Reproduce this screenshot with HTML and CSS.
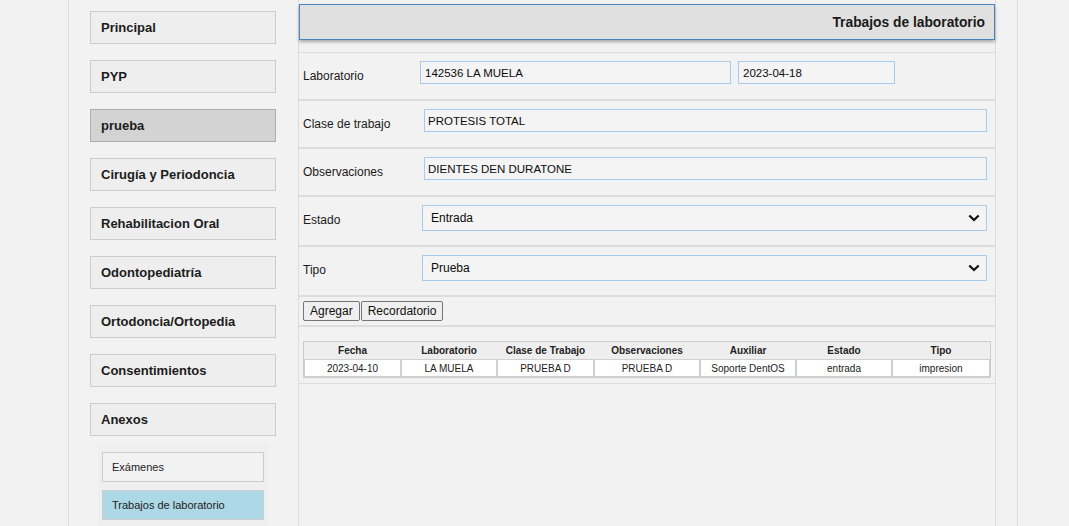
FILE: index.html
```html
<!DOCTYPE html>
<html lang="es">
<head>
<meta charset="utf-8">
<title>Trabajos de laboratorio</title>
<link rel="stylesheet" href="styles.css">
</head>
<body>
<div class="page">
  <aside class="sidebar">
    <div class="nav-btn">Principal</div>
    <div class="nav-btn">PYP</div>
    <div class="nav-btn active">prueba</div>
    <div class="nav-btn">Cirugía y Periodoncia</div>
    <div class="nav-btn">Rehabilitacion Oral</div>
    <div class="nav-btn">Odontopediatría</div>
    <div class="nav-btn">Ortodoncia/Ortopedia</div>
    <div class="nav-btn">Consentimientos</div>
    <div class="nav-btn">Anexos</div>
    <div class="submenu">
      <div class="sub-btn">Exámenes</div>
      <div class="sub-btn active">Trabajos de laboratorio</div>
    </div>
  </aside>
  <main class="panel">
    <div class="panel-header">Trabajos de laboratorio</div>
    <div class="row">
      <span class="lbl lbl-a">Laboratorio</span>
      <div class="field field-lab">142536 LA MUELA</div>
      <div class="field field-date">2023-04-18</div>
    </div>
    <div class="row">
      <span class="lbl lbl-b">Clase de trabajo</span>
      <div class="field field-wide">PROTESIS TOTAL</div>
    </div>
    <div class="row">
      <span class="lbl lbl-b">Observaciones</span>
      <div class="field field-wide">DIENTES DEN DURATONE</div>
    </div>
    <div class="row row-select">
      <span class="lbl lbl-c">Estado</span>
      <div class="select">
        <span>Entrada</span>
        <svg class="chev" width="12" height="8" viewBox="0 0 12 8"><polyline points="1.3,1.5 6,6 10.7,1.5" fill="none" stroke="#111" stroke-width="2.3"/></svg>
      </div>
    </div>
    <div class="row row-select">
      <span class="lbl lbl-c">Tipo</span>
      <div class="select">
        <span>Prueba</span>
        <svg class="chev" width="12" height="8" viewBox="0 0 12 8"><polyline points="1.3,1.5 6,6 10.7,1.5" fill="none" stroke="#111" stroke-width="2.3"/></svg>
      </div>
    </div>
    <div class="row row-buttons">
      <button class="btn">Agregar</button>
      <button class="btn">Recordatorio</button>
    </div>
    <div class="row row-table">
      <table class="grid">
        <thead>
          <tr>
            <th class="c1">Fecha</th>
            <th class="c2">Laboratorio</th>
            <th class="c3">Clase de Trabajo</th>
            <th class="c4">Observaciones</th>
            <th class="c5">Auxiliar</th>
            <th class="c6">Estado</th>
            <th class="c7">Tipo</th>
          </tr>
        </thead>
        <tbody>
          <tr>
            <td>2023-04-10</td>
            <td>LA MUELA</td>
            <td>PRUEBA D</td>
            <td>PRUEBA D</td>
            <td>Soporte DentOS</td>
            <td>entrada</td>
            <td>impresion</td>
          </tr>
        </tbody>
      </table>
    </div>
  </main>
</div>
</body>
</html>
```

FILE: styles.css
```css
* { box-sizing: border-box; }

html, body {
  margin: 0;
  padding: 0;
  background: #f2f2f2;
  font-family: "Liberation Sans", Arial, sans-serif;
  color: #1a1a1a;
}

.page {
  margin-left: 68px;
  width: 950px;
  min-height: 526px;
  border-left: 1px solid #dcdcdc;
  border-right: 1px solid #dcdcdc;
  display: flex;
  align-items: stretch;
}

/* Sidebar */
.sidebar {
  width: 229px;
  flex: none;
  padding: 11px 0 0 21px;
  display: flex;
  flex-direction: column;
}

.nav-btn {
  width: 186px;
  height: 33px;
  margin-bottom: 16px;
  padding-left: 10px;
  display: flex;
  align-items: center;
  background: #eeeeee;
  border: 1px solid #cccccc;
  font-weight: bold;
  font-size: 13px;
  color: #1c1c1c;
}

.nav-btn.active {
  background: #d3d3d3;
  border-color: #adadad;
}

.nav-btn:nth-last-child(2) { margin-bottom: 8px; }

.submenu {
  margin-left: 8px;
  width: 170px;
  flex: 1;
  padding: 8px 4px 0;
  background: #efefef;
}

.sub-btn {
  width: 162px;
  height: 30px;
  margin-bottom: 8px;
  padding-left: 9px;
  display: flex;
  align-items: center;
  border: 1px solid #cccccc;
  background: #f2f2f2;
  font-size: 11px;
  color: #222;
}

.sub-btn.active {
  background: #add8e6;
}

/* Main panel */
.panel {
  width: 698px;
  flex: none;
  border-left: 1px solid #dcdcdc;
  border-right: 1px solid #dcdcdc;
  padding-top: 4px;
}

.panel-header {
  height: 36px;
  margin-bottom: 12px;
  padding-right: 9px;
  display: flex;
  align-items: center;
  justify-content: flex-end;
  background: #e0e0e0;
  border: 1px solid #4b84bb;
  box-shadow: 0 2px 3px rgba(0, 0, 0, 0.3);
  font-weight: bold;
  font-size: 13.8px;
  color: #1a1a1a;
}

.row {
  display: flex;
  align-items: flex-start;
  border-top: 1px solid #dddddd;
  border-bottom: 1px solid #dddddd;
  padding: 8px 8px 15px 4px;
}

.row-select { padding-bottom: 14px; }

.lbl {
  flex: none;
  padding-top: 8px;
  font-size: 12px;
  line-height: 14px;
  color: #1a1a1a;
}

.lbl-a { width: 117px; }
.lbl-b { width: 121px; }
.lbl-c { width: 119px; }

.field {
  height: 23px;
  display: flex;
  align-items: center;
  padding-left: 4px;
  background: #f4f4f4;
  border: 1px solid #a7caed;
  font-size: 11.5px;
  color: #0d0d0d;
}

.field-lab { width: 311px; }
.field-date { width: 157px; margin-left: 7px; }
.field-wide { flex: 1; padding-left: 3px; }

.select {
  flex: 1;
  height: 26px;
  display: flex;
  align-items: center;
  justify-content: space-between;
  padding: 0 6px 0 8px;
  background: #f4f4f4;
  border: 1px solid #a7caed;
  font-size: 12px;
  color: #0d0d0d;
}

.chev { display: block; }

.row-buttons {
  padding: 4px 4px;
  gap: 1px;
}

.btn {
  height: 20px;
  padding: 0 6px;
  margin: 0;
  background: #efefef;
  border: 1px solid #767676;
  border-radius: 2px;
  font-family: "Liberation Sans", Arial, sans-serif;
  font-size: 12px;
  color: #111;
}

.row-table {
  padding: 14px 4px 5px;
}

.grid {
  width: 688px;
  table-layout: fixed;
  border-collapse: separate;
  border-spacing: 0;
  border: 1px solid #cccccc;
  background: #eeeeee;
  font-size: 10px;
  color: #222;
}

.grid .c1 { width: 97px; }
.grid .c2 { width: 96px; }
.grid .c3 { width: 97px; }
.grid .c4 { width: 106px; }
.grid .c5 { width: 96px; }
.grid .c6 { width: 96px; }
.grid .c7 { width: 98px; }

.grid th {
  height: 17px;
  padding: 0;
  font-weight: bold;
  text-align: center;
  background: #eeeeee;
}

.grid td {
  height: 18px;
  padding: 0;
  text-align: center;
  background: #ffffff;
  border: 1px solid #d0d0d0;
}
```
